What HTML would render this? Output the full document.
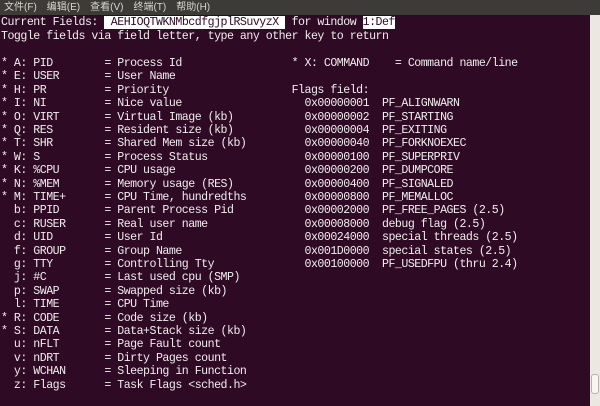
<!DOCTYPE html>
<html><head><meta charset="utf-8"><style>
html,body{margin:0;padding:0;width:600px;height:406px;overflow:hidden;background:#2f0a25;}
#menu{position:absolute;left:0;top:0;width:600px;height:15px;background:#3c3b37;color:#d8d6cf;font:10px "Liberation Sans","Noto Sans CJK SC",sans-serif;line-height:15px;}
#menu span{margin-left:4px;margin-right:6px}
.l{position:absolute;left:1px;height:14px;line-height:14px;white-space:pre;color:#eeeeec;font-family:"Liberation Mono",monospace;font-size:11.6px;letter-spacing:-0.5px;z-index:2}
.hl{background:#fff;color:#2f0a25}
#sb{position:absolute;left:590px;top:15px;width:10px;height:391px;background:#ece8e1;}
#thumb{position:absolute;left:591px;top:374px;width:8px;height:20px;background:#f8f6f2;border:1px solid #b8b3aa;border-radius:3px;box-sizing:border-box}
</style></head><body>
<div id="menu"><span>文件(F)</span><span>编辑(E)</span><span>查看(V)</span><span>终端(T)</span><span>帮助(H)</span></div>
<div class="l" style="top:16px">Current Fields: <span class="hl"> AEHIOQTWKNMbcdfgjplRSuvyzX </span> for window <span class="hl">1:Def</span></div>
<div class="l" style="top:30px">Toggle fields via field letter, type any other key to return</div>
<div class="l" style="top:57px">* A: PID        = Process Id                 * X: COMMAND    = Command name/line</div>
<div class="l" style="top:70.4px">* E: USER       = User Name</div>
<div class="l" style="top:83.8px">* H: PR         = Priority                   Flags field:</div>
<div class="l" style="top:97.2px">* I: NI         = Nice value                   0x00000001  PF_ALIGNWARN</div>
<div class="l" style="top:110.6px">* O: VIRT       = Virtual Image (kb)           0x00000002  PF_STARTING</div>
<div class="l" style="top:124px">* Q: RES        = Resident size (kb)           0x00000004  PF_EXITING</div>
<div class="l" style="top:137.4px">* T: SHR        = Shared Mem size (kb)         0x00000040  PF_FORKNOEXEC</div>
<div class="l" style="top:150.8px">* W: S          = Process Status               0x00000100  PF_SUPERPRIV</div>
<div class="l" style="top:164.2px">* K: %CPU       = CPU usage                    0x00000200  PF_DUMPCORE</div>
<div class="l" style="top:177.6px">* N: %MEM       = Memory usage (RES)           0x00000400  PF_SIGNALED</div>
<div class="l" style="top:191px">* M: TIME+      = CPU Time, hundredths         0x00000800  PF_MEMALLOC</div>
<div class="l" style="top:204.4px">  b: PPID       = Parent Process Pid           0x00002000  PF_FREE_PAGES (2.5)</div>
<div class="l" style="top:217.8px">  c: RUSER      = Real user name               0x00008000  debug flag (2.5)</div>
<div class="l" style="top:231.2px">  d: UID        = User Id                      0x00024000  special threads (2.5)</div>
<div class="l" style="top:244.6px">  f: GROUP      = Group Name                   0x001D0000  special states (2.5)</div>
<div class="l" style="top:258px">  g: TTY        = Controlling Tty              0x00100000  PF_USEDFPU (thru 2.4)</div>
<div class="l" style="top:271.4px">  j: #C         = Last used cpu (SMP)</div>
<div class="l" style="top:284.8px">  p: SWAP       = Swapped size (kb)</div>
<div class="l" style="top:298.2px">  l: TIME       = CPU Time</div>
<div class="l" style="top:311.6px">* R: CODE       = Code size (kb)</div>
<div class="l" style="top:325px">* S: DATA       = Data+Stack size (kb)</div>
<div class="l" style="top:338.4px">  u: nFLT       = Page Fault count</div>
<div class="l" style="top:351.8px">  v: nDRT       = Dirty Pages count</div>
<div class="l" style="top:365.2px">  y: WCHAN      = Sleeping in Function</div>
<div class="l" style="top:378.6px">  z: Flags      = Task Flags &lt;sched.h&gt;</div>
<div id="sb"></div><div id="thumb"></div>
</body></html>
